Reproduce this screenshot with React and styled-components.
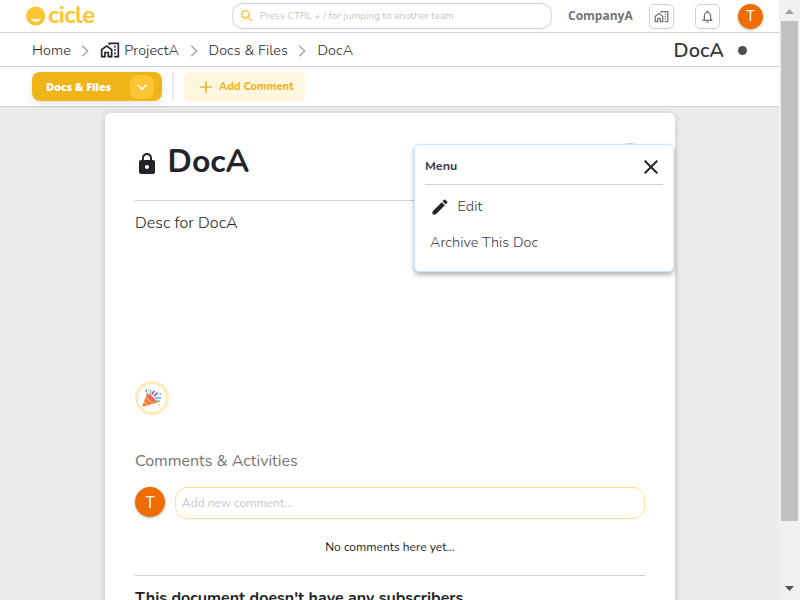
import React from 'react';
import styled, { createGlobalStyle } from 'styled-components';
import {
  MdSearch, MdOutlineHomeWork, MdNotificationsNone, MdLock, MdEdit, MdClose,
  MdAdd, MdKeyboardArrowDown,
} from 'react-icons/md';

const GlobalStyle = createGlobalStyle`
  * { box-sizing: border-box; }
  body {
    margin: 0;
    overflow: hidden;
    font-family: Nunito, "Open Sans", sans-serif;
    color: #212529;
    background: #ebebeb;
  }
  button, input { font-family: inherit; margin: 0; }
  h1, h2, h3, p { margin: 0; }
`;

const Screen = styled.div`
  display: flex;
  width: 800px;
  height: 600px;
  overflow: hidden;
`;

const Page = styled.div`
  width: 779px;
  flex: none;
  display: flex;
  flex-direction: column;
`;

const TopBar = styled.header`
  height: 33px;
  flex: none;
  display: flex;
  align-items: center;
  padding: 0 16px 0 26px;
  background: #fff;
  border-bottom: 1px solid #d0d0d0;
`;

const Logo = styled.div`
  display: flex;
  align-items: center;
  width: 206px;
  height: 32px;
  gap: 2px;
  color: #fdc532;
`;

const LogoText = styled.span`
  padding-bottom: 2px;
  font-size: 24px;
  line-height: 30px;
  font-weight: 700;
  letter-spacing: -0.6px;
`;

const SearchBox = styled.div`
  display: flex;
  align-items: center;
  gap: 5px;
  width: 320px;
  height: 26px;
  padding: 0 6px;
  border: 1px solid #d0d0d0;
  border-radius: 11px;
  color: #fdc532;
`;

const SearchInput = styled.input`
  flex: 1;
  padding: 0;
  border: 0;
  outline: 0;
  font-size: 10px;
  line-height: 14px;
  background: none;
  &::placeholder { color: #c8c8c8; opacity: 1; }
`;

const Company = styled.span`
  margin-left: 16px;
  width: 81px;
  font: 700 12px/16px "Open Sans", sans-serif;
  color: #757575;
`;

const IconButton = styled.button`
  display: flex;
  align-items: center;
  justify-content: center;
  width: 25px;
  height: 25px;
  padding: 0;
  margin-right: ${(p) => p.$gap}px;
  color: #757575;
  background: #fff;
  border: 1px solid #d0d0d0;
  border-radius: 5px;
`;

const Avatar = styled.div`
  display: flex;
  align-items: center;
  justify-content: center;
  flex: none;
  width: ${(p) => p.$size}px;
  height: ${(p) => p.$size}px;
  border-radius: 50%;
  background: #ef6c00;
  color: #fff;
  font: 400 ${(p) => p.$font}px Roboto, sans-serif;
  box-shadow: 0 1px 3px rgba(0, 0, 0, 0.3);
`;

const CrumbBar = styled.nav`
  height: 34px;
  flex: none;
  display: flex;
  align-items: center;
  padding: 0 32px;
  background: #fff;
  border-bottom: 1px solid #d0d0d0;
`;

const Crumb = styled.span`
  display: flex;
  align-items: center;
  gap: 4px;
  font-size: 14.4px;
  line-height: 20px;
  font-weight: 350;
  letter-spacing: 0.07px;
  white-space: nowrap;
  color: #212529;
`;

const Separator = styled.svg`
  width: 8px;
  height: 12px;
  margin: 2px 11px 0 10.5px;
  fill: none;
  stroke: #a6a6a6;
  stroke-width: 1.5;
`;

const CrumbTitle = styled.h2`
  margin-left: auto;
  padding-top: 2px;
  font-size: 20px;
  line-height: 24px;
  font-weight: 600;
  color: #343a40;
`;

const StatusDot = styled.span`
  width: 9px;
  height: 9px;
  margin: 2px 0 0 14px;
  border-radius: 50%;
  background: #4d4d4d;
`;

const ActionBar = styled.div`
  height: 40px;
  flex: none;
  display: flex;
  align-items: center;
  padding: 0 32px;
  background: #fff;
  border-bottom: 1px solid #d0d0d0;
`;

const FilesButton = styled.button`
  display: flex;
  align-items: center;
  justify-content: space-between;
  width: 130px;
  height: 29px;
  padding: 0 8px 0 14px;
  border: 0;
  border-radius: 8px;
  background: #f0b418;
  color: #fff;
  font: 800 11px/16px "Open Sans", sans-serif;
  letter-spacing: -0.15px;
  box-shadow: 0 3px 8px rgba(0, 0, 0, 0.1);
`;

const Toggle = styled.span`
  display: flex;
  align-items: center;
  justify-content: center;
  width: 24px;
  height: 24px;
  border-radius: 8px;
  background: #fdc532;
`;

const Divider = styled.span`
  width: 2px;
  height: 29px;
  margin: 0 10px;
  background: #e9e9e9;
`;

const CommentButton = styled.button`
  display: flex;
  align-items: center;
  gap: 3px;
  width: 121px;
  height: 30px;
  padding: 0 0 0 12px;
  border: 0;
  border-radius: 6px;
  background: #fff6e0;
  color: #f0b52a;
  font-size: 11px;
  font-weight: 800;
  letter-spacing: -0.05px;
  white-space: nowrap;
`;

const Main = styled.main`
  flex: 1;
  min-height: 0;
  padding: 6px 104px 0 105px;
  overflow: hidden;
`;

const Document = styled.article`
  position: relative;
  width: 570px;
  height: 700px;
  padding: 28px 30px 0;
  background: #fff;
  border-radius: 6px;
  box-shadow: 0 1px 6px rgba(0, 0, 0, 0.18);
`;

const TitleRow = styled.div`
  display: flex;
  align-items: center;
  gap: 8.5px;
  height: 60px;
  padding-bottom: 17px;
  border-bottom: 1px solid #d0d0d0;
  & > svg { margin-top: 4px; }
`;

const Title = styled.h1`
  font-size: 32px;
  line-height: 40px;
  font-weight: 700;
`;

const Description = styled.p`
  margin-top: 10px;
  height: 170px;
  font-size: 16px;
  line-height: 24px;
  font-weight: 350;
  letter-spacing: 0.08px;
`;

const Reaction = styled.button`
  display: flex;
  align-items: center;
  justify-content: center;
  width: 34px;
  height: 34px;
  padding: 0;
  border: 3px solid #ffebba;
  border-radius: 50%;
  background: #fff;
`;

const SectionTitle = styled.h3`
  margin-top: 34px;
  font-size: 16px;
  line-height: 24px;
  font-weight: 400;
  color: #757575;
`;

const CommentRow = styled.div`
  display: flex;
  gap: 10px;
  margin-top: 14px;
`;

const CommentInput = styled.input`
  flex: 1;
  height: 32px;
  padding: 0 6px;
  border: 1px solid #ffe08f;
  border-radius: 12px;
  outline: 0;
  font-size: 12px;
  &::placeholder { color: #c8c8c8; opacity: 1; }
`;

const EmptyNote = styled.p`
  height: 57px;
  padding-top: 19px;
  border-bottom: 1px solid #d0d0d0;
  text-align: center;
  font-size: 12px;
  line-height: 18px;
`;

const Subscribers = styled.p`
  margin-top: 10px;
  font-size: 16px;
  line-height: 24px;
  font-weight: 700;
`;

const MoreHandle = styled.span`
  position: absolute;
  top: 30px;
  left: 512px;
  width: 26px;
  height: 26px;
  border-radius: 50%;
  background: #d0d0d0;
`;

const Menu = styled.div`
  position: absolute;
  top: 31px;
  left: 309px;
  width: 260px;
  height: 128px;
  padding: 5px 10px;
  background: #fff;
  border: 1px solid #cfe2ff;
  border-radius: 5px;
  box-shadow: 0 3px 5px rgba(0, 0, 0, 0.3);
`;

const MenuHeader = styled.div`
  display: flex;
  align-items: center;
  justify-content: space-between;
  height: 35px;
  padding-bottom: 3px;
  font-size: 12.5px;
  font-weight: 700;
  color: #343a40;
  border-bottom: 1px solid #d0d0d0;
  & > svg { margin-top: 2px; color: #212529; }
`;

const MenuItem = styled.div`
  display: flex;
  align-items: center;
  gap: 7.5px;
  height: 36px;
  padding-left: 5px;
  font-size: 14.4px;
  font-weight: 350;
  letter-spacing: 0.07px;
  color: #343a40;
  & > svg { margin-top: 2px; color: #212529; }
`;

const MenuList = styled.div`
  padding-top: 3px;
`;

const Scrollbar = styled.aside`
  display: flex;
  flex-direction: column;
  width: 21px;
  height: 600px;
  padding: 0 2px;
  background: #f0f0f0;
`;

const ScrollArrow = styled.svg`
  width: 17px;
  height: 21px;
  flex: none;
  fill: ${(p) => p.$color};
`;

const Thumb = styled.div`
  height: 500px;
  background: #c0c0c0;
`;

const Track = styled.div`
  flex: 1;
`;

function LogoMark() {
  return (
    <svg width="20" height="20" viewBox="0 0 20 20">
      <circle cx="9.7" cy="10" r="9.6" fill="#fdc532" />
      <path d="M4.600 12.300c2.500 1.200 7.700 1.200 10.200 0-.8 2.200-2.600 3.400-5.100 3.400s-4.300-1.200-5.100-3.400z" fill="#fff" />
    </svg>
  );
}

function PartyPopper() {
  return (
    <svg width="20" height="20" viewBox="0 0 36 36">
      <path d="M9 10 1 32c-.3.900.4 1.600 1.200 1.200L27 26C24 19 16 12 9 10z" fill="#ef6860" />
      <path d="M8 13.500 6.500 17.500c4 6 8 9.500 13 10.800l4.500-1.300C16 24 11 20 8 13.500zM4.800 22l-1.500 4c2 3 4 5 7 5.600l4-1.200C9.500 28.500 6.500 26 4.800 22z" fill="#ffac33" />
      <path d="M15 13c1-4 1-6 0-10" fill="none" stroke="#55acee" strokeWidth="2" />
      <path d="M22 15c2-3 4-4 6-7" fill="none" stroke="#7467b5" strokeWidth="2.800" />
      <path d="m18 12 4-7" fill="none" stroke="#dd4a55" strokeWidth="3" />
      <path d="M24 19c4-4 6 1 10-2" fill="none" stroke="#55acee" strokeWidth="2.500" />
      <path d="M25 24c3-2 4 1 7 0" fill="none" stroke="#77b255" strokeWidth="3" />
      <path d="M8 7c-2-2 0-3 1-4" fill="none" stroke="#5c9fe0" strokeWidth="2.500" />
      <circle cx="12" cy="3" r="1.500" fill="#ffcc4d" />
      <circle cx="33" cy="11" r="1.600" fill="#5c9fe0" />
      <circle cx="31" cy="30" r="1.600" fill="#ffcc4d" />
      <circle cx="9" cy="10" r="1.500" fill="#77b255" />
    </svg>
  );
}

function Chevron() {
  return (
    <Separator viewBox="0 0 8 12"><path d="M1.200.800 6.700 6l-5.500 5.200" /></Separator>
  );
}

export default function App() {
  return (
    <Screen>
      <GlobalStyle />
      <Page>
        <TopBar>
          <Logo><LogoMark /><LogoText>cicle</LogoText></Logo>
          <SearchBox>
            <MdSearch size={16} />
            <SearchInput placeholder="Press CTRL + / for jumping to another team" />
          </SearchBox>
          <Company>CompanyA</Company>
          <IconButton $gap={21}><MdOutlineHomeWork size={15} /></IconButton>
          <IconButton $gap={18}><MdNotificationsNone size={15} /></IconButton>
          <Avatar $size={25} $font={14}>T</Avatar>
        </TopBar>
        <CrumbBar>
          <Crumb>Home</Crumb>
          <Chevron />
          <Crumb><MdOutlineHomeWork size={20} />ProjectA</Crumb>
          <Chevron />
          <Crumb>Docs &amp; Files</Crumb>
          <Chevron />
          <Crumb>DocA</Crumb>
          <CrumbTitle>DocA</CrumbTitle>
          <StatusDot />
        </CrumbBar>
        <ActionBar>
          <FilesButton>
            Docs &amp; Files
            <Toggle><MdKeyboardArrowDown size={20} /></Toggle>
          </FilesButton>
          <Divider />
          <CommentButton><MdAdd size={20} />Add Comment</CommentButton>
        </ActionBar>
        <Main>
          <Document>
            <TitleRow>
              <MdLock size={24} />
              <Title>DocA</Title>
            </TitleRow>
            <Description>Desc for DocA</Description>
            <Reaction><PartyPopper /></Reaction>
            <SectionTitle>Comments &amp; Activities</SectionTitle>
            <CommentRow>
              <Avatar $size={30} $font={16}>T</Avatar>
              <CommentInput placeholder="Add new comment..." />
            </CommentRow>
            <EmptyNote>No comments here yet...</EmptyNote>
            <Subscribers>This document doesn't have any subscribers.</Subscribers>
            <MoreHandle />
            <Menu>
              <MenuHeader>Menu<MdClose size={24} /></MenuHeader>
              <MenuList>
                <MenuItem><MdEdit size={20} />Edit</MenuItem>
                <MenuItem>Archive This Doc</MenuItem>
              </MenuList>
            </Menu>
          </Document>
        </Main>
      </Page>
      <Scrollbar>
        <ScrollArrow $color="#a0a0a0" viewBox="0 0 17 21"><path d="M4 14h9L8.500 9z" /></ScrollArrow>
        <Thumb />
        <Track />
        <ScrollArrow $color="#505050" viewBox="0 0 17 21"><path d="M4 7h9L8.500 12z" /></ScrollArrow>
      </Scrollbar>
    </Screen>
  );
}
